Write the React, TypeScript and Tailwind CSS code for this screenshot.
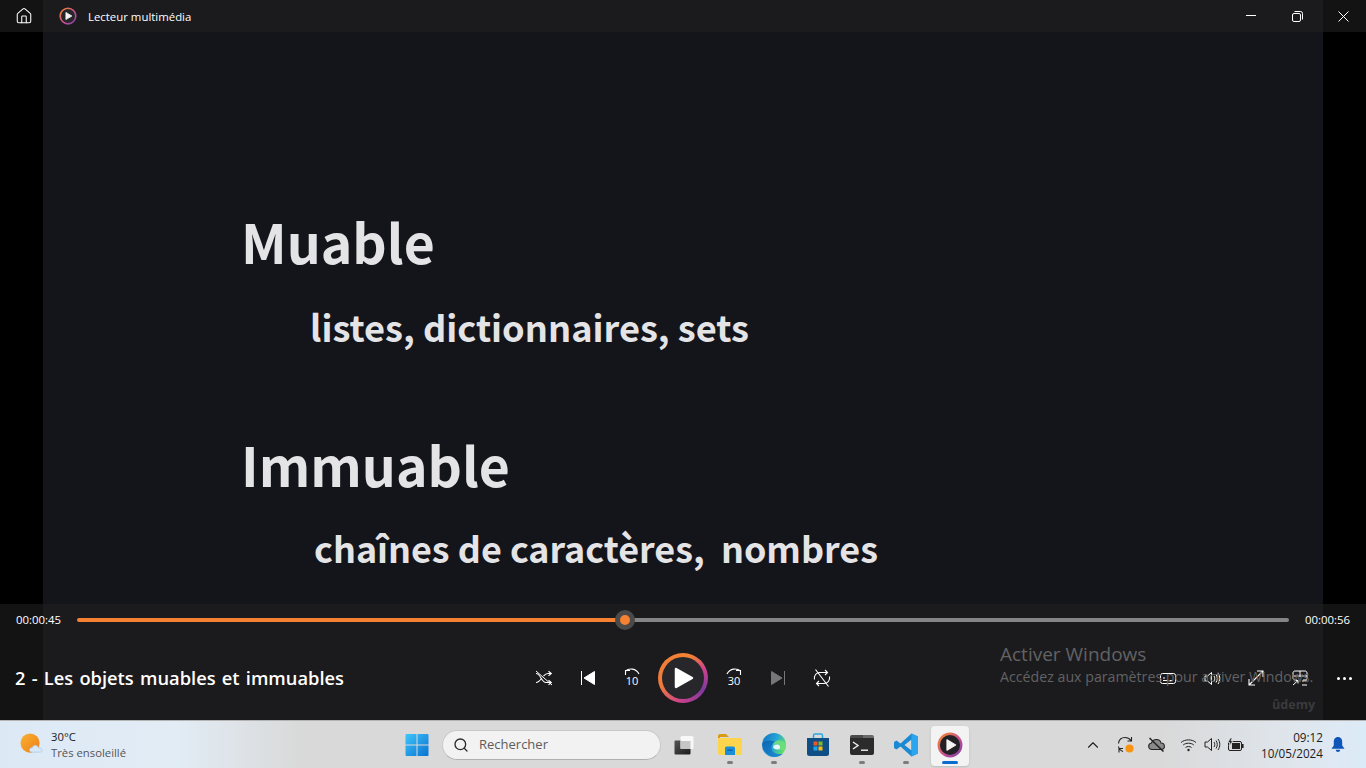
import { Home, Search, ChevronUp } from 'lucide-react'

const uiFont = "font-['Open_Sans','Noto_Sans',sans-serif]"

function PlayerLogo({ size, inner }: { size: number; inner: string }) {
  return (
    <svg width={size} height={size} viewBox="0 0 24 24">
      <defs>
        <linearGradient id={`logo-${size}`} x1="0" y1="0" x2="1" y2="1">
          <stop offset="0" stopColor="#f58a2c" />
          <stop offset="0.55" stopColor="#c9508f" />
          <stop offset="1" stopColor="#7f3fa8" />
        </linearGradient>
      </defs>
      <circle cx="12" cy="12" r="10.4" fill={inner} stroke={`url(#logo-${size})`} strokeWidth="2.2" />
      <path d="M9.2 7.2 L17.2 12 L9.2 16.8 Z" fill="#f4f4f4" stroke="#f4f4f4" strokeWidth="1" strokeLinejoin="round" />
    </svg>
  )
}

function Shuffle() {
  return (
    <svg width="18" height="16" viewBox="0 0 18 16" fill="none" stroke="#fff" strokeWidth="1.1">
      <path d="M1 3.5 C6 3.5 6 12.5 11 12.5 H16" />
      <path d="M1 12.5 C3.5 12.5 5 10.5 6.5 8.5 M8.5 6 C10 4.5 11 3.5 13 3.5 H16" />
      <path d="M13.5 1.2 L16.3 3.5 L13.5 5.8 M13.5 10.2 L16.3 12.5 L13.5 14.8" />
      <path d="M1 1 L17 15" strokeWidth="1" />
    </svg>
  )
}

function Repeat() {
  return (
    <svg width="18" height="18" viewBox="0 0 18 18" fill="none" stroke="#fff" strokeWidth="1.1">
      <path d="M1.5 10.5 C0.8 6.5 3.2 3.5 7 3.5 H14.5 M12 1 L14.5 3.5 L12 6" />
      <path d="M16.5 7.5 C17.2 11.5 14.8 14.5 11 14.5 H3.5 M6 12 L3.5 14.5 L6 17" />
      <path d="M2.5 0.5 L15.5 17.5" />
    </svg>
  )
}

function Seek({ label, flip }: { label: string; flip?: boolean }) {
  return (
    <div className="flex flex-col items-center -mt-[2px]">
      <svg width="16" height="8" viewBox="0 0 16 8" fill="none" stroke="#fff" strokeWidth="1.1" className={flip ? '-scale-x-100' : ''}>
        <path d="M1.5 7 V2.5 H6 M1.5 3 C5 0 12 0 15 6" />
      </svg>
      <span className={`${uiFont} text-[11px] leading-[10px] text-white`}>{label}</span>
    </div>
  )
}

function SkipIcon({ next }: { next?: boolean }) {
  return (
    <svg width="16" height="16" viewBox="0 0 16 16" className={next ? '-scale-x-100' : ''}>
      <rect x="1" y="1" width="1" height="14" fill={next ? '#777' : '#fff'} />
      <path d="M14.5 1.5 V14.5 L4 8 Z" fill={next ? '#777' : '#fff'} stroke={next ? '#777' : '#fff'} strokeLinejoin="round" />
    </svg>
  )
}

function Subtitle() {
  return (
    <svg width="16" height="13" viewBox="0 0 16 13" fill="none" stroke="#fff" strokeWidth="1">
      <rect x="0.5" y="1.5" width="15" height="10" rx="2" />
      <path d="M3 8.5 H8 M9.5 8.5 H13 M3 6 H5" />
    </svg>
  )
}

function Speaker({ color = '#fff' }: { color?: string }) {
  return (
    <svg width="17" height="15" viewBox="0 0 17 15" fill="none" stroke={color} strokeWidth="1">
      <path d="M1 5 H3.5 L7.5 1.5 V13.5 L3.5 10 H1 Z" />
      <path d="M10 5 C11 6.5 11 8.5 10 10 M12 3.5 C13.7 6 13.7 9 12 11.5 M14 2 C16.4 5.5 16.4 9.5 14 13" />
    </svg>
  )
}

function Fullscreen() {
  return (
    <svg width="16" height="16" viewBox="0 0 16 16" fill="none" stroke="#fff" strokeWidth="1.1">
      <path d="M1 15 L15 1 M9 1 H15 V7 M1 9 V15 H7" />
    </svg>
  )
}

function MiniPlayer() {
  return (
    <svg width="16" height="16" viewBox="0 0 16 16" fill="none" stroke="#fff" strokeWidth="1">
      <path d="M5 10 H3 C1.8 10 1 9.2 1 8 V3 C1 1.8 1.8 1 3 1 H13 C14.2 1 15 1.8 15 3 V8 C15 9.2 14.2 10 13 10 H11" />
      <path d="M8 1 V7 M1 6 H15" />
      <path d="M1 15 L6 10.5 M3 10.5 H6 V13.5 M10 11 H15 M10 15 H15" />
    </svg>
  )
}

function CtrlButton({ children }: { children: React.ReactNode }) {
  return <button className="w-11 h-11 flex items-center justify-center shrink-0">{children}</button>
}

function WeatherIcon() {
  return (
    <svg width="23" height="23" viewBox="0 0 24 24">
      <defs>
        <linearGradient id="sun" x1="0" y1="0" x2="1" y2="1">
          <stop offset="0" stopColor="#f9b233" />
          <stop offset="1" stopColor="#ef7d16" />
        </linearGradient>
      </defs>
      <circle cx="10.5" cy="10.5" r="10" fill="url(#sun)" />
      <path d="M13 20 C10.5 20 9.5 18.5 10 17 C10.4 15.8 11.5 15.3 12.7 15.5 C13.3 13.3 15 12.5 16.6 12.8 C18.2 13.1 19 14.4 19.2 15.6 C21.5 15.5 23 16.6 23 18 C23 19.3 22 20 20.5 20 Z" fill="#d7e8f8" stroke="#9fc3e8" strokeWidth="0.6" />
    </svg>
  )
}

function WindowsLogo() {
  return (
    <svg width="24" height="24" viewBox="0 0 24 24">
      <defs>
        <linearGradient id="win" x1="0" y1="0" x2="1" y2="1">
          <stop offset="0" stopColor="#3fc5fb" />
          <stop offset="1" stopColor="#0a72d0" />
        </linearGradient>
      </defs>
      <path d="M1.5 1 H11.5 V11.5 H0.5 V2 Q0.5 1 1.5 1 Z M12.5 1 H22.5 Q23.5 1 23.5 2 V11.5 H12.5 Z M0.5 12.5 H11.5 V23 H1.5 Q0.5 23 0.5 22 Z M12.5 12.5 H23.5 V22 Q23.5 23 22.5 23 H12.5 Z" fill="url(#win)" />
    </svg>
  )
}

function TaskView() {
  return (
    <svg width="20" height="20" viewBox="0 0 20 20">
      <defs>
        <linearGradient id="tv" x1="0" y1="0" x2="1" y2="1">
          <stop offset="0" stopColor="#555" />
          <stop offset="1" stopColor="#1b1b1b" />
        </linearGradient>
      </defs>
      <rect x="0.5" y="5.5" width="16" height="14" rx="1" fill="url(#tv)" />
      <rect x="6.5" y="1" width="13" height="13" rx="1.5" fill="#f8f8f8" />
      <rect x="6.5" y="6" width="10" height="8" fill="#c6c6c6" />
    </svg>
  )
}

function Explorer() {
  return (
    <svg width="24" height="24" viewBox="0 0 24 24">
      <path d="M0 3 Q0 1 2 1 H8 L11 4 H2 V6 H0 Z" fill="#d99a16" />
      <path d="M0 5 H22 Q24 5 24 7 V20 Q24 22 22 22 H2 Q0 22 0 20 Z" fill="#fcd54d" />
      <path d="M7 15 Q7 13.5 8.5 13.5 H15.5 Q17 13.5 17 15 V22 H7 Z" fill="#1b8ed8" />
      <rect x="9.5" y="16.5" width="5" height="1.2" fill="#0b5a9e" />
    </svg>
  )
}

function Edge() {
  return (
    <svg width="24" height="24" viewBox="0 0 24 24">
      <defs>
        <linearGradient id="edgeA" x1="0" y1="0" x2="1" y2="0.4">
          <stop offset="0" stopColor="#0f6fc0" />
          <stop offset="0.6" stopColor="#27a5d6" />
          <stop offset="1" stopColor="#5fdc6c" />
        </linearGradient>
        <linearGradient id="edgeB" x1="0" y1="0" x2="1" y2="1">
          <stop offset="0" stopColor="#0d64b0" />
          <stop offset="1" stopColor="#1f8fd8" />
        </linearGradient>
      </defs>
      <circle cx="12" cy="12" r="12" fill="url(#edgeA)" />
      <path d="M0.2 11 C1 18 6 24 12.5 24 C16 24 19 22.5 21 20.5 C16 22 10.5 20.5 9.5 16 C8.8 12.5 11 9.5 13.5 9 C8 6.5 2 7 0.2 11 Z" fill="url(#edgeB)" />
      <path d="M24 14 C24 9.5 20 6.5 15.5 7.5 C12 8.3 10.5 11 11 14 C13 10.8 17 11 18 13.5 C18.5 15 17.5 16 16 16.5 C18 17.5 24 17.5 24 14 Z" fill="#6fe07a" opacity="0.85" />
      <path d="M11 14 C13 10.8 17 11 18 13.5 C18.5 15 17.5 16 16 16.5 C13 16.8 11.5 15.5 11 14 Z" fill="#e6f6fb" />
    </svg>
  )
}

function Store() {
  return (
    <svg width="24" height="24" viewBox="0 0 24 24">
      <path d="M7.5 5 V2.5 Q7.5 1 9 1 H15 Q16.5 1 16.5 2.5 V5" fill="none" stroke="#29a8e0" strokeWidth="1.5" />
      <path d="M1 5 H23 V20.5 Q23 23 20.5 23 H3.5 Q1 23 1 20.5 Z" fill="#0f4f86" />
      <rect x="7.5" y="8.5" width="4" height="4" fill="#f0542a" />
      <rect x="12.5" y="8.5" width="4" height="4" fill="#7fba2a" />
      <rect x="7.5" y="13.5" width="4" height="4" fill="#1ca4ee" />
      <rect x="12.5" y="13.5" width="4" height="4" fill="#fdb913" />
    </svg>
  )
}

function Terminal() {
  return (
    <svg width="24" height="20" viewBox="0 0 24 20">
      <path d="M0 2 Q0 0 2 0 H13 V4 H0 Z" fill="#4a4a4a" />
      <path d="M13 0 H22 Q24 0 24 2 V4 H13 Z" fill="#6a6a6a" />
      <path d="M0 3 H24 V18 Q24 20 22 20 H2 Q0 20 0 18 Z" fill="#2b2b2b" />
      <path d="M3 7 L8 10.5 L3 14" fill="none" stroke="#f0f0f0" strokeWidth="1.4" />
      <rect x="11" y="14.5" width="7" height="1.4" fill="#f0f0f0" />
    </svg>
  )
}

function VSCode() {
  return (
    <svg width="24" height="24" viewBox="0 0 24 24">
      <path d="M17.5 0.5 L24 3.5 V20.5 L17.5 23.5 L6.5 13.5 L2.5 16.5 L0 15 V9 L2.5 7.5 L6.5 10.5 Z M17.5 6.5 L10.5 12 L17.5 17.5 Z" fill="#1a8ad4" fillRule="evenodd" />
      <path d="M17.5 0.5 L24 3.5 V20.5 L17.5 23.5 Z" fill="#2aa5ee" />
    </svg>
  )
}

function SyncBadge() {
  return (
    <svg width="18" height="18" viewBox="0 0 18 18" fill="none" stroke="#222" strokeWidth="1.1">
      <path d="M1.5 7.5 C2 3.5 5 1.5 8 1.5 C10.5 1.5 12.5 2.5 14 4.5 M14.5 1 V5 H10.5" />
      <path d="M1.5 10.5 C1.8 12.5 3 14.5 6 15.5 M2 16.5 V12.5 H6" />
      <circle cx="12.5" cy="12.5" r="4" fill="#f7930f" stroke="none" />
    </svg>
  )
}

function CloudOff() {
  return (
    <svg width="17" height="15" viewBox="0 0 17 15" fill="none" stroke="#222" strokeWidth="1.1">
      <path d="M4 12.5 C2 12.5 0.7 11 0.7 9.2 C0.7 7.5 2 6.2 3.5 6 C4.2 3.7 6 2.5 8.5 2.5 C11 2.5 12.6 4 13 6 C15 6 16.4 7.5 16.4 9.3 C16.4 11 15 12.5 13 12.5 Z" fill="#8a8a8a" />
      <path d="M1.5 1 L15.5 14.5" strokeWidth="1.5" stroke="#222" />
    </svg>
  )
}

function Wifi() {
  return (
    <svg width="17" height="14" viewBox="0 0 17 14" fill="none" stroke="#222" strokeWidth="1">
      <path d="M1 4.5 C5 1 12 1 16 4.5 M3.2 7 C6 4.6 11 4.6 13.8 7 M5.5 9.5 C7 8.2 10 8.2 11.5 9.5" />
      <circle cx="8.5" cy="12" r="1.2" fill="#222" stroke="none" />
    </svg>
  )
}

function Battery() {
  return (
    <svg width="17" height="14" viewBox="0 0 17 14">
      <rect x="1.5" y="3.5" width="13" height="9" rx="1.5" fill="#d8d8d8" stroke="#222" />
      <rect x="5" y="5" width="8" height="6" fill="#222" />
      <rect x="15" y="6" width="1.6" height="4" fill="#222" />
      <path d="M3.5 0 L1 4.5 H3 L2 8 L6 3 H4 L5 0 Z" fill="#222" stroke="#dcdcdc" strokeWidth="0.6" />
    </svg>
  )
}

function Bell() {
  return (
    <svg width="14" height="15" viewBox="0 0 14 15">
      <path d="M7 0 C10 0 11.2 2.4 11.2 5 V8.5 L13.5 11.8 H0.5 L2.8 8.5 V5 C2.8 2.4 4 0 7 0 Z M4.8 12.8 H9.2 C9 14.2 8.2 15 7 15 C5.8 15 5 14.2 4.8 12.8 Z" fill="#0f54b8" />
    </svg>
  )
}

function TaskItem({ children, dot, active }: { children: React.ReactNode; dot?: boolean; active?: boolean }) {
  return (
    <div className="relative w-11 h-12 flex items-center justify-center shrink-0">
      {active && <div className="absolute left-[3px] top-[5px] w-[38px] h-[40px] rounded bg-[#f3f3f3] shadow-sm" />}
      <div className="relative">{children}</div>
      {dot && <div className="absolute bottom-[5px] left-[19px] w-[6px] h-[3px] rounded-full bg-[#7c7c7c]" />}
      {active && <div className="absolute bottom-[5px] left-[14px] w-4 h-[3px] rounded-full bg-[#0a6ccf]" />}
    </div>
  )
}

export default function App() {
  return (
    <div className={`w-[1366px] h-[768px] overflow-hidden flex flex-col ${uiFont}`}>
      <div className="relative h-[720px] shrink-0 flex bg-black">
        {/* video */}
        <div className="w-[43px] bg-black" />
        <div className="flex-1 bg-[#14141b] pl-[198px] pt-[205px] font-['Noto_Sans_CJK_JP',sans-serif] font-bold text-[#e4e4e7]">
          <div className="text-[53.5px] leading-[72px]">Muable</div>
          <div className="text-[36.2px] leading-[50px] pl-[69px] mt-[24px]">listes, dictionnaires, sets</div>
          <div className="text-[53.5px] leading-[72px] mt-[77px]">Immuable</div>
          <div className="text-[35.9px] leading-[50px] pl-[73px] mt-[22px]">chaînes de caractères,&nbsp; nombres</div>
        </div>
        <div className="w-[43px] bg-black" />

        {/* title bar */}
        <div className="absolute top-0 inset-x-0 h-8 flex items-center bg-[#1f1f1f]/60">
          <div className="w-12 flex justify-center">
            <Home size={18} strokeWidth={1.4} color="#fff" />
          </div>
          <div className="ml-[11px]"><PlayerLogo size={18} inner="#26262a" /></div>
          <span className="ml-[11px] mt-px text-[11.4px] font-medium text-white">Lecteur multimédia</span>
          <div className="ml-auto flex items-center h-full">
            <div className="w-[46px] flex justify-center -mt-[2px]"><div className="w-[10px] h-px bg-white" /></div>
            <div className="w-[46px] flex justify-center">
              <svg width="11" height="11" viewBox="0 0 11 11" fill="none" stroke="#fff" strokeWidth="1">
                <rect x="0.5" y="2.5" width="8" height="8" rx="1.5" />
                <path d="M2.5 0.5 H8.5 Q10.5 0.5 10.5 2.5 V8.5" />
              </svg>
            </div>
            <div className="w-[46px] flex justify-center">
              <svg width="11" height="11" viewBox="0 0 11 11" fill="none" stroke="#fff" strokeWidth="1">
                <path d="M0.5 0.5 L10.5 10.5 M10.5 0.5 L0.5 10.5" />
              </svg>
            </div>
          </div>
        </div>

        {/* controls */}
        <div className="absolute bottom-0 inset-x-0 h-[116px] flex flex-col bg-[#1f1f1f]/60">
          <div className="h-[32px] flex items-center">
            <span className="w-[77px] pl-4 text-[11.4px] text-white">00:00:45</span>
            <div className="relative w-[1212px] h-[4px] flex rounded-full">
              <div className="w-[548px] bg-[#f58233] rounded-l-full" />
              <div className="flex-1 bg-[#858585] rounded-r-full" />
              <div className="absolute left-[538px] top-[-8px] w-5 h-5 rounded-full bg-[#4a4a4a] flex items-center justify-center">
                <div className="w-[10px] h-[10px] rounded-full bg-[#f58233]" />
              </div>
            </div>
            <span className="ml-4 text-[11.4px] text-white">00:00:56</span>
          </div>
          <div className="flex items-center mt-[20px] h-11">
            <div className="w-[522px] pl-[15px] text-[18.3px] [word-spacing:1.5px] font-semibold text-white whitespace-nowrap">2 - Les objets muables et immuables</div>
            <CtrlButton><Shuffle /></CtrlButton>
            <CtrlButton><SkipIcon /></CtrlButton>
            <CtrlButton><Seek label="10" /></CtrlButton>
            <div className="w-[58px] flex justify-center shrink-0">
              <div className="w-[50px] h-[50px] rounded-full p-[4px] bg-[conic-gradient(#f58233_0deg,#f58233_20deg,#c9408f_70deg,#7f3a9e_120deg,#c9408f_185deg,#f07a3a_250deg,#f58233_360deg)]">
                <div className="w-full h-full rounded-full bg-[#27272b] flex items-center justify-center">
                  <svg width="20" height="22" viewBox="0 0 20 22" className="ml-[2px]">
                    <path d="M2 2 L18 11 L2 20 Z" fill="#fff" stroke="#fff" strokeWidth="2.5" strokeLinejoin="round" />
                  </svg>
                </div>
              </div>
            </div>
            <CtrlButton><Seek label="30" flip /></CtrlButton>
            <CtrlButton><SkipIcon next /></CtrlButton>
            <CtrlButton><Repeat /></CtrlButton>
            <div className="ml-auto flex">
              <CtrlButton><Subtitle /></CtrlButton>
              <CtrlButton><Speaker /></CtrlButton>
              <CtrlButton><Fullscreen /></CtrlButton>
              <CtrlButton><MiniPlayer /></CtrlButton>
              <CtrlButton>
                <div className="flex gap-[3px]">
                  <span className="w-[3px] h-[3px] rounded-full bg-white" />
                  <span className="w-[3px] h-[3px] rounded-full bg-white" />
                  <span className="w-[3px] h-[3px] rounded-full bg-white" />
                </div>
              </CtrlButton>
            </div>
          </div>
        </div>

        {/* activation watermark */}
        <div className="absolute left-[1000px] top-[642px] text-[#626264] pointer-events-none whitespace-nowrap">
          <div className="text-[19px] leading-6">Activer Windows</div>
          <div className="text-[14.2px] leading-[22px]">Accédez aux paramètres pour activer Windows.</div>
        </div>
        <div className="absolute left-[1272px] top-[696px] text-[12.6px] font-bold text-[#3a3a3c] pointer-events-none">ûdemy</div>
      </div>

      {/* taskbar */}
      <div className="h-12 shrink-0 flex items-center border-t border-[#b4b4b4] bg-[linear-gradient(90deg,#dce9f5_0%,#e2ecf5_13%,#d9d9d9_22%,#d9d9d9_85%,#dfe6ed_95%,#dcebf8_100%)]">
        <div className="w-[395px] pl-[20px] flex items-center shrink-0">
          <WeatherIcon />
          <div className="ml-2 text-[11.3px] leading-[16px]">
            <div className="text-[#1c1c1c]">30°C</div>
            <div className="text-[#555]">Très ensoleillé</div>
          </div>
        </div>
        <div className="w-11 flex justify-center shrink-0"><WindowsLogo /></div>
        <div className="ml-[3px] w-[219px] h-[30px] rounded-full bg-[#f2f2f2] border border-[#c8c8c8] border-b-[#b0b0b0] flex items-center pl-[10px] shrink-0">
          <Search size={16} strokeWidth={2} color="#2a2a2a" />
          <span className="ml-[10px] text-[13px] text-[#5c5c5c]">Rechercher</span>
        </div>
        <div className="ml-px"><TaskItem><TaskView /></TaskItem></div>
        <div className="ml-[2px] flex">
          <TaskItem dot><Explorer /></TaskItem>
          <TaskItem dot><Edge /></TaskItem>
          <TaskItem><Store /></TaskItem>
          <TaskItem dot><Terminal /></TaskItem>
          <TaskItem dot><VSCode /></TaskItem>
          <TaskItem active><PlayerLogo size={26} inner="#222226" /></TaskItem>
        </div>
        <div className="ml-auto flex items-center pr-[21px]">
          <ChevronUp size={18} strokeWidth={1.5} color="#222" />
          <div className="ml-[8px] w-8 flex justify-center"><SyncBadge /></div>
          <div className="w-8 -ml-px flex justify-center"><CloudOff /></div>
          <div className="w-8 flex justify-center"><Wifi /></div>
          <div className="w-6 -ml-1 flex justify-center"><Speaker color="#222" /></div>
          <div className="w-6 -ml-px flex justify-center"><Battery /></div>
          <div className="ml-[13px] text-right text-[11.7px] leading-[16px] text-[#1c1c1c]">
            <div>09:12</div>
            <div>10/05/2024</div>
          </div>
          <div className="ml-2"><Bell /></div>
        </div>
      </div>
    </div>
  )
}
